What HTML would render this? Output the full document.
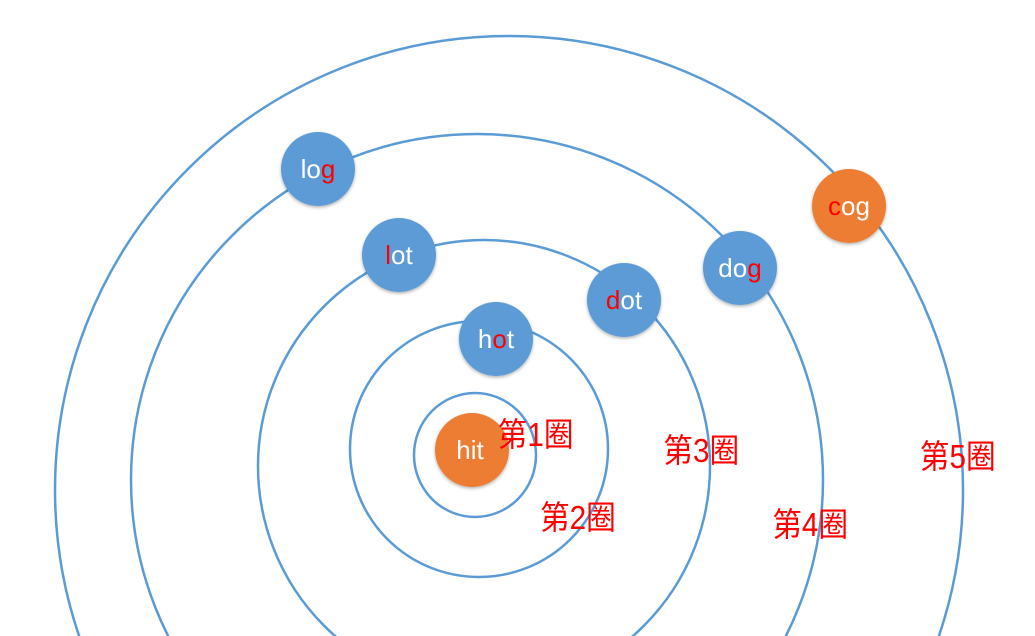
<!DOCTYPE html>
<html><head><meta charset="utf-8"><style>
html,body{margin:0;padding:0;background:#fff;width:1035px;height:636px;overflow:hidden;}
svg{display:block}
.n{font-family:"Liberation Sans",sans-serif;font-size:26px;fill:#fff;text-anchor:middle;}
.r{fill:#f00}
.l{font-family:"Liberation Sans","Noto Sans CJK SC",sans-serif;font-size:33px;fill:#f00;}
</style></head><body>
<svg width="1035" height="636" viewBox="0 0 1035 636" xmlns="http://www.w3.org/2000/svg">
<defs><filter id="s" x="-30%" y="-30%" width="160%" height="160%"><feDropShadow dx="0" dy="1.5" stdDeviation="1.5" flood-color="#000" flood-opacity="0.3"/></filter></defs>
<g fill="none" stroke="#5B9BD5" stroke-width="2.5">
<ellipse cx="475" cy="455" rx="61" ry="62"/>
<ellipse cx="479" cy="449" rx="129" ry="128"/>
<ellipse cx="484" cy="466" rx="226" ry="226"/>
<ellipse cx="477" cy="480" rx="346" ry="346"/>
<ellipse cx="509" cy="490" rx="454" ry="454"/>
</g>
<g filter="url(#s)">
<circle cx="472" cy="450" r="37" fill="#ED7D31"/>
<circle cx="496" cy="339" r="37" fill="#5B9BD5"/>
<circle cx="399" cy="255" r="37" fill="#5B9BD5"/>
<circle cx="318" cy="169" r="37" fill="#5B9BD5"/>
<circle cx="624" cy="300" r="37" fill="#5B9BD5"/>
<circle cx="740" cy="268" r="37" fill="#5B9BD5"/>
<circle cx="849" cy="206" r="37" fill="#ED7D31"/>
</g>
<text class="n" x="470" y="459">hit</text>
<text class="n" x="496" y="348">h<tspan class="r">o</tspan>t</text>
<text class="n" x="399" y="264"><tspan class="r">l</tspan>ot</text>
<text class="n" x="318" y="178">lo<tspan class="r">g</tspan></text>
<text class="n" x="624" y="309"><tspan class="r">d</tspan>ot</text>
<text class="n" x="740" y="277">do<tspan class="r">g</tspan></text>
<text class="n" x="849" y="215"><tspan class="r">c</tspan>og</text>
<g transform="scale(0.9,1)">
<text class="l" x="553" y="446">第1圈</text>
<text class="l" x="600" y="529">第2圈</text>
<text class="l" x="737" y="462">第3圈</text>
<text class="l" x="858" y="536">第4圈</text>
<text class="l" x="1022" y="468">第5圈</text>
</g>
</svg>
</body></html>
